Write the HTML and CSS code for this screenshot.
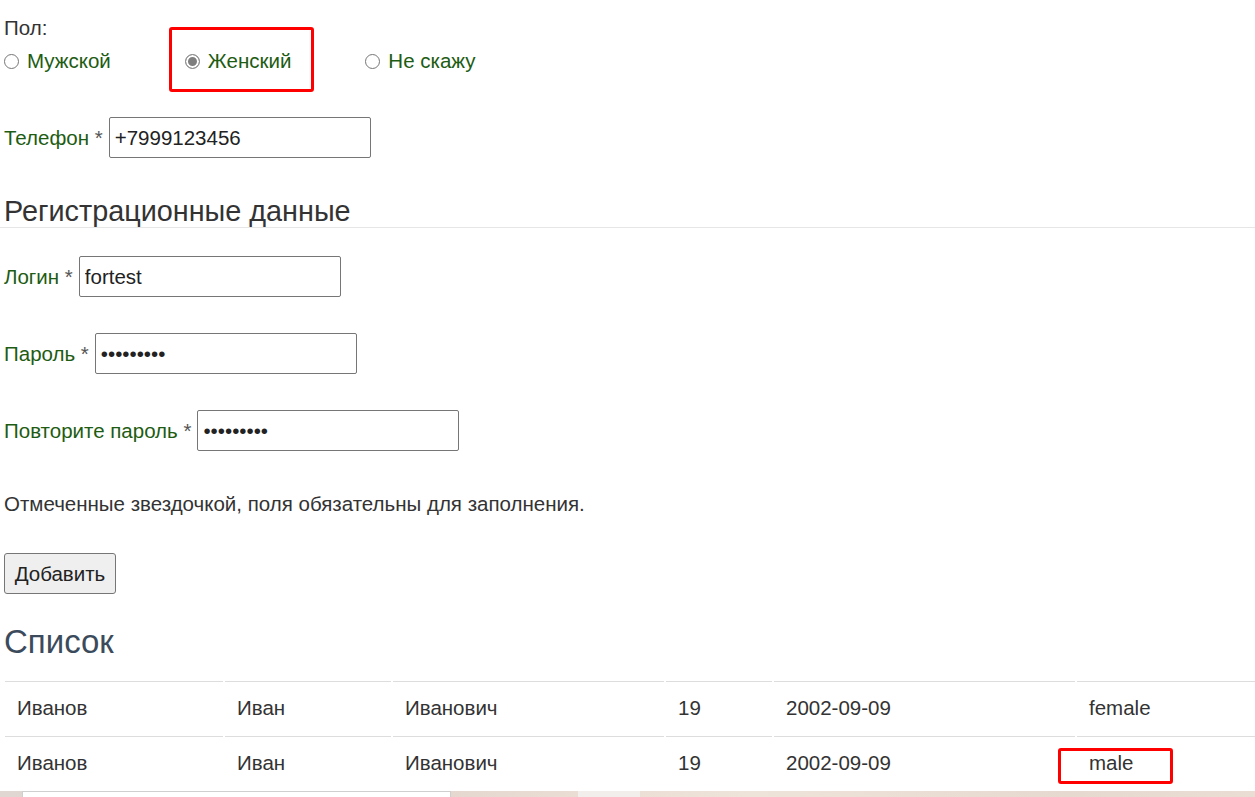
FILE: index.html
```html
<!DOCTYPE html>
<html lang="ru">
<head>
<meta charset="utf-8">
<title>Регистрация</title>
<link rel="stylesheet" href="styles.css">
</head>
<body>
<div class="page">
  <form class="form">
    <div class="gender-title">Пол:</div>
    <div class="radios">
      <label class="radio-opt"><input type="radio" name="sex" class="radio"><span class="lbl">Мужской</span></label>
      <label class="radio-opt"><input type="radio" name="sex" class="radio" checked><span class="lbl">Женский</span><span class="mark mark-gender"></span></label>
      <label class="radio-opt"><input type="radio" name="sex" class="radio"><span class="lbl">Не скажу</span></label>
    </div>

    <div class="row row-phone">
      <label class="lbl">Телефон <span class="req">*</span></label>
      <input class="field" type="text" value="+7999123456">
    </div>

    <h2 class="section">Регистрационные данные</h2>

    <div class="row row-first">
      <label class="lbl">Логин <span class="req">*</span></label>
      <input class="field" type="text" value="fortest">
    </div>
    <div class="row">
      <label class="lbl">Пароль <span class="req">*</span></label>
      <input class="field" type="password" value="123456789">
    </div>
    <div class="row">
      <label class="lbl">Повторите пароль <span class="req">*</span></label>
      <input class="field" type="password" value="123456789">
    </div>

    <p class="note">Отмеченные звездочкой, поля обязательны для заполнения.</p>

    <button type="button" class="btn">Добавить</button>
  </form>

  <h2 class="list-title">Список</h2>

  <table class="list">
    <tr>
      <td class="c1">Иванов</td>
      <td class="c2">Иван</td>
      <td class="c3">Иванович</td>
      <td class="c4">19</td>
      <td class="c5">2002-09-09</td>
      <td class="c6">female</td>
    </tr>
    <tr>
      <td>Иванов</td>
      <td>Иван</td>
      <td>Иванович</td>
      <td>19</td>
      <td>2002-09-09</td>
      <td class="cell-mark">male<span class="mark mark-male"></span></td>
    </tr>
  </table>
</div>
<footer class="footer">
  <div class="footer-box"></div>
  <div class="footer-gap"></div>
  <div class="footer-light"></div>
</footer>
</body>
</html>
```

FILE: styles.css
```css
html, body {
  margin: 0;
  padding: 0;
  overflow: hidden;
  background: #fff;
}
body {
  font-family: "Liberation Sans", Arial, sans-serif;
  font-size: 20.5px;
  color: #333;
  width: 1255px;
}
.page {
  padding: 16px 0 0 4px;
}
.form {
  margin: 0;
}
.gender-title {
  line-height: 24px;
  color: #333;
}
.radios {
  display: flex;
  align-items: center;
  gap: 74px;
  margin-top: 9px;
  height: 24px;
}
.radio-opt {
  position: relative;
  display: flex;
  align-items: center;
  gap: 8px;
  line-height: 24px;
}
.radio {
  appearance: none;
  -webkit-appearance: none;
  margin: 0;
  width: 15px;
  height: 15px;
  border: 1px solid #767676;
  border-radius: 50%;
  background: #fff;
  box-sizing: border-box;
}
.radio:checked {
  border: 1.5px solid #8a8a8a;
  background: #7f7f7f;
  box-shadow: inset 0 0 0 2px #fff;
}
.lbl {
  color: #1d5c12;
}
.req {
  color: #555;
}
.mark {
  position: absolute;
  border: 3px solid #ff0000;
  border-radius: 3px;
  box-sizing: border-box;
  pointer-events: none;
}
.mark-gender {
  left: -16px;
  top: -22px;
  width: 145px;
  height: 65px;
}
.row {
  display: flex;
  align-items: center;
  gap: 6px;
  height: 41px;
  margin-top: 36px;
}
.row-phone {
  margin-top: 44px;
}
.row-first {
  margin-top: 28px;
}
.field {
  width: 262px;
  height: 41px;
  box-sizing: border-box;
  border: 1px solid #767676;
  border-radius: 2px;
  padding: 0 5px;
  font-family: "Liberation Sans", Arial, sans-serif;
  font-size: 20.5px;
  color: #222;
  background: #fff;
  margin: 0;
}
.section {
  margin: 37px 0 0 -4px;
  padding-left: 4px;
  font-size: 28.8px;
  font-weight: normal;
  line-height: 32px;
  color: #333;
  border-bottom: 1px solid #e6e6e6;
}
.note {
  margin: 41px 0 0;
  line-height: 24px;
  color: #333;
}
.btn {
  display: block;
  margin-top: 37px;
  width: 112px;
  height: 41px;
  box-sizing: border-box;
  border: 1px solid #767676;
  border-radius: 3px;
  background: #efefef;
  font-family: "Liberation Sans", Arial, sans-serif;
  font-size: 20.5px;
  color: #222;
  padding: 0;
}
.list-title {
  margin: 29px 0 0;
  font-size: 33px;
  font-weight: normal;
  line-height: 38px;
  color: #3b4b5c;
}
.list {
  margin-top: 20px;
  margin-left: -1px;
  border-collapse: separate;
  border-spacing: 2px 0;
  table-layout: fixed;
  width: 1262px;
}
.list td {
  box-sizing: border-box;
  border-top: 1px solid #dddddd;
  padding: 0 12px 4px;
  height: 55px;
  line-height: 23px;
  vertical-align: middle;
  color: #333;
  white-space: nowrap;
}
.c1 { width: 218px; }
.c2 { width: 166px; }
.c3 { width: 271px; }
.c4 { width: 106px; }
.c5 { width: 301px; }
.cell-mark {
  position: relative;
}
.mark-male {
  left: -19px;
  top: 11px;
  width: 115px;
  height: 36px;
}
.footer {
  display: flex;
  height: 60px;
  padding-left: 22px;
  background: linear-gradient(90deg, #e0d7d2 0%, #e3d5cd 30%, #efe4da 60%, #e6d9d0 85%, #eaddd3 100%);
}
.footer-box {
  width: 429px;
  box-sizing: border-box;
  background: #fff;
  border: 1px solid #cfcfcf;
  border-bottom: none;
}
.footer-gap {
  width: 127px;
}
.footer-light {
  width: 62px;
  background: #f2eeeb;
}
```
